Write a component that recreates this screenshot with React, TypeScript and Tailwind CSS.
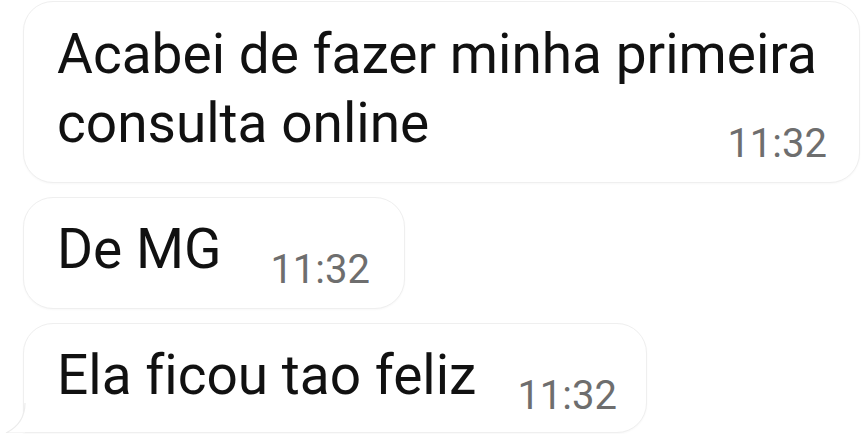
import React from "react";

function Time() {
  return (
    <span className="text-[40px] leading-[40px] text-[#6e6e6e] mb-[-6px] shrink-0">
      11:32
    </span>
  );
}

export default function App() {
  return (
    <div className="w-[865px] h-[434px] overflow-hidden bg-white font-['Roboto',sans-serif] [font-variant-ligatures:none]">
      <div className="flex flex-col items-start gap-[14px] pt-[1px] pl-[23px]">
        <div className="w-[837px] rounded-[30px] border border-[#efefef] bg-white shadow-[0_1px_2px_rgba(0,0,0,0.03)] pt-[18px] pb-[24px] pl-[33px] pr-[32px] text-[55px] leading-[69px] text-[#111]">
          <div>Acabei de fazer minha primeira</div>
          <div className="flex items-end justify-between">
            <span>consulta online</span>
            <Time />
          </div>
        </div>
        <div className="w-[382px] flex items-end justify-between rounded-[30px] border border-[#efefef] bg-white shadow-[0_1px_2px_rgba(0,0,0,0.03)] pt-[17px] pb-[24px] pl-[33px] pr-[34px] text-[55px] leading-[69px] text-[#111]">
          <span>De MG</span>
          <Time />
        </div>
        <div className="relative w-[624px] flex items-end justify-between rounded-[30px] rounded-bl-none border border-[#efefef] bg-white shadow-[0_1px_2px_rgba(0,0,0,0.03)] pt-[17px] pb-[22px] pl-[33px] pr-[29px] text-[55px] leading-[69px] text-[#111]">
          <span>Ela ficou tao feliz</span>
          <Time />
          <svg
            className="absolute left-[-20px] bottom-[-1px]"
            width="24"
            height="30"
            viewBox="0 0 24 30"
            fill="none"
          >
            <path d="M21 0 C21 14 14 24 2 30 L21 30" stroke="#ececec" strokeWidth="1.2" fill="white" />
          </svg>
        </div>
      </div>
    </div>
  );
}
